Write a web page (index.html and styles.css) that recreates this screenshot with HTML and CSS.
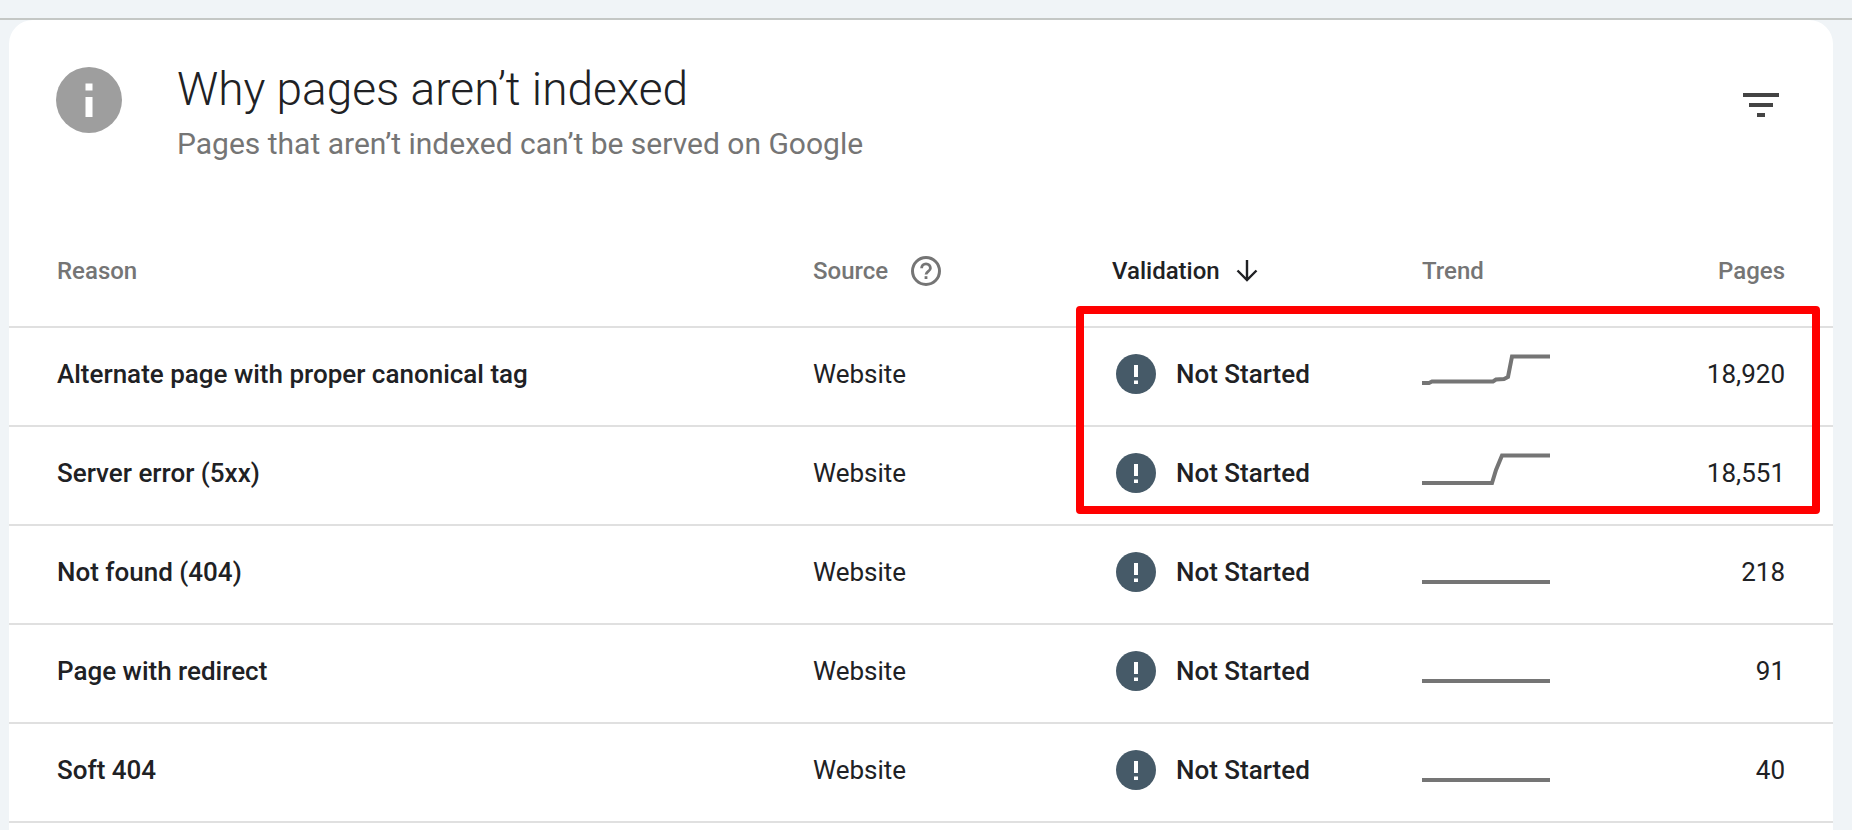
FILE: index.html
```html
<!DOCTYPE html>
<html lang="en">
<head>
<meta charset="utf-8">
<title>Why pages aren't indexed</title>
<link rel="stylesheet" href="styles.css">
</head>
<body>
<div class="topbar"></div>
<main class="card">
  <header class="card-head">
    <svg class="info-icon" viewBox="0 0 66 66"><circle cx="33" cy="33" r="33" fill="#9e9e9e"/><rect x="29.5" y="16.5" width="7" height="7" fill="#fff"/><rect x="29.5" y="30" width="7" height="20" fill="#fff"/></svg>
    <div class="titles">
      <h1 class="title">Why pages aren’t indexed</h1>
      <p class="subtitle">Pages that aren’t indexed can’t be served on Google</p>
    </div>
    <div class="filter"><span class="f1"></span><span class="f2"></span><span class="f3"></span></div>
  </header>
  <div class="row head-row">
    <div>Reason</div>
    <div class="source-head">Source
      <svg class="help" viewBox="0 0 30 30"><circle cx="15" cy="15" r="13.5" fill="none" stroke="#757575" stroke-width="3"/><path d="M10.6 12.2a4.4 4.4 0 0 1 8.8 0c0 3-4.4 3.2-4.4 6.3" fill="none" stroke="#757575" stroke-width="2.8"/><rect x="13.6" y="20.2" width="2.8" height="2.8" fill="#757575"/></svg>
    </div>
    <div class="val-head">Validation
      <svg class="arrow" viewBox="0 0 22 22"><path d="M11 0v20M1.5 10.5 11 20l9.5-9.5" fill="none" stroke="#202124" stroke-width="2.4"/></svg>
    </div>
    <div>Trend</div>
    <div class="num">Pages</div>
  </div>
  <div class="row body-row">
    <div class="reason">Alternate page with proper canonical tag</div>
    <div>Website</div>
    <div class="status"><svg class="warn" viewBox="0 0 40 40"><circle cx="20" cy="20" r="20" fill="#465a68"/><rect x="18" y="11" width="4" height="12" fill="#fff"/><rect x="18" y="26.5" width="4" height="3.5" fill="#fff"/></svg>Not Started</div>
    <svg class="spark" viewBox="0 0 128 48"><polyline points="0,30 7,30 10,28.5 71,28.5 74,26.5 82,26 86,24 90,3.5 128,3.5"/></svg>
    <div class="num">18,920</div>
  </div>
  <div class="row body-row">
    <div class="reason">Server error (5xx)</div>
    <div>Website</div>
    <div class="status"><svg class="warn" viewBox="0 0 40 40"><circle cx="20" cy="20" r="20" fill="#465a68"/><rect x="18" y="11" width="4" height="12" fill="#fff"/><rect x="18" y="26.5" width="4" height="3.5" fill="#fff"/></svg>Not Started</div>
    <svg class="spark" viewBox="0 0 128 48"><polyline points="0,31 70,31 74,18 80,3.5 128,3.5"/></svg>
    <div class="num">18,551</div>
  </div>
  <div class="row body-row">
    <div class="reason">Not found (404)</div>
    <div>Website</div>
    <div class="status"><svg class="warn" viewBox="0 0 40 40"><circle cx="20" cy="20" r="20" fill="#465a68"/><rect x="18" y="11" width="4" height="12" fill="#fff"/><rect x="18" y="26.5" width="4" height="3.5" fill="#fff"/></svg>Not Started</div>
    <svg class="spark" viewBox="0 0 128 48"><polyline points="0,31 128,31"/></svg>
    <div class="num">218</div>
  </div>
  <div class="row body-row">
    <div class="reason">Page with redirect</div>
    <div>Website</div>
    <div class="status"><svg class="warn" viewBox="0 0 40 40"><circle cx="20" cy="20" r="20" fill="#465a68"/><rect x="18" y="11" width="4" height="12" fill="#fff"/><rect x="18" y="26.5" width="4" height="3.5" fill="#fff"/></svg>Not Started</div>
    <svg class="spark" viewBox="0 0 128 48"><polyline points="0,31 128,31"/></svg>
    <div class="num">91</div>
  </div>
  <div class="row body-row">
    <div class="reason">Soft 404</div>
    <div>Website</div>
    <div class="status"><svg class="warn" viewBox="0 0 40 40"><circle cx="20" cy="20" r="20" fill="#465a68"/><rect x="18" y="11" width="4" height="12" fill="#fff"/><rect x="18" y="26.5" width="4" height="3.5" fill="#fff"/></svg>Not Started</div>
    <svg class="spark" viewBox="0 0 128 48"><polyline points="0,31 128,31"/></svg>
    <div class="num">40</div>
  </div>
  <div class="row-end"></div>
  <div class="highlight"></div>
</main>
</body>
</html>
```
FILE: styles.css
```css
* { box-sizing: border-box; }
html, body { margin: 0; height: 830px; overflow: hidden; }
body { background: #f0f4f7; font-family: Roboto, "Liberation Sans", sans-serif; color: #202124; }
.topbar { height: 20px; border-bottom: 2px solid #c4c7c5; }
.card {
  position: relative;
  height: 810px;
  margin: 0 19px 0 9px;
  background: #fff;
  border-radius: 24px 24px 0 0;
}
.card-head { display: flex; align-items: flex-start; height: 236px; padding: 47px 48px 0 47px; }
.info-icon { width: 66px; height: 66px; flex: none; }
.titles { flex: 1; margin-left: 55px; margin-top: -3px; }
.title { margin: 0; font-size: 46px; line-height: 50px; font-weight: 300; }
.subtitle { margin: 12px 0 0; font-size: 30px; line-height: 36px; color: #757575; }
.filter { display: flex; flex-direction: column; align-items: center; gap: 6px; margin: 26px 6px 0 0; }
.filter span { display: block; height: 4px; background: #444; }
.f1 { width: 36px; }
.f2 { width: 24px; }
.f3 { width: 8px; }
.row {
  display: grid;
  grid-template-columns: 756px 299px 310px 128px 1fr;
  align-items: center;
  padding: 0 48px;
  font-size: 26px;
}
.head-row { height: 70px; font-size: 24px; font-weight: 500; color: #757575; padding-bottom: 48px; }
.body-row { height: 99px; border-top: 2px solid #e0e0e0; padding-bottom: 6px; }
.row-end { border-top: 2px solid #e0e0e0; }
.source-head, .val-head { display: flex; align-items: center; }
.help { width: 30px; height: 30px; margin-left: 23px; }
.val-head { color: #202124; }
.arrow { width: 22px; height: 22px; margin-left: 16px; }
.reason { font-weight: 500; }
.status { display: flex; align-items: center; font-weight: 500; }
.warn { width: 40px; height: 40px; margin: 0 20px 0 4px; }
.spark { width: 128px; height: 48px; margin-top: 6px; fill: none; stroke: #757575; stroke-width: 4; }
.num { text-align: right; }
.highlight {
  position: absolute;
  left: 1067px;
  top: 286px;
  width: 744px;
  height: 208px;
  border: 8px solid #f00;
  border-radius: 4px;
}
```
